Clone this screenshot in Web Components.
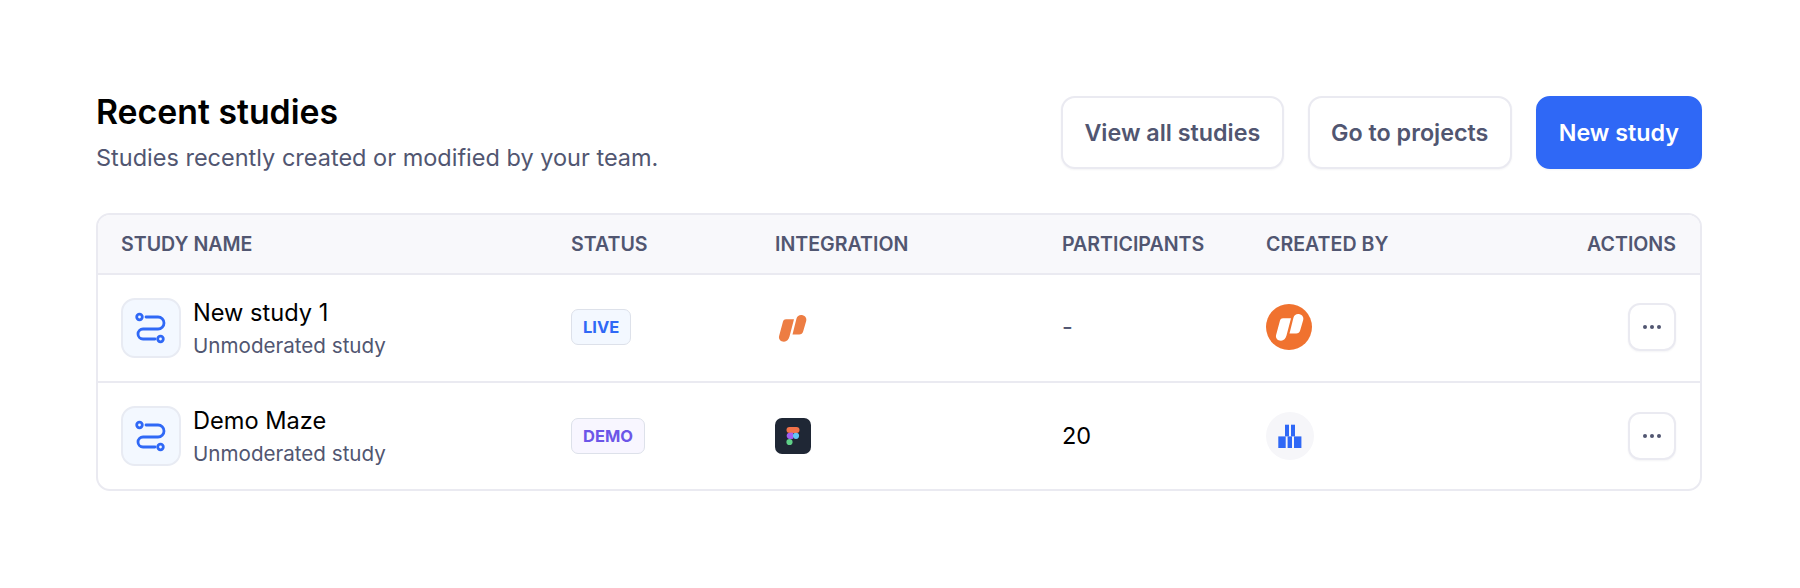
<!DOCTYPE html>
<html lang="en">
<head>
<meta charset="utf-8">
<title>Recent studies</title>
<style>
  html, body { margin: 0; background: #fff; }
  body { font-family: Inter, "Noto Sans", sans-serif; color: #000; }
</style>
</head>
<body>
<studies-page>
  <section-header slot="header" heading="Recent studies" description="Studies recently created or modified by your team.">
    <app-button>View all studies</app-button>
    <app-button>Go to projects</app-button>
    <app-button primary>New study</app-button>
  </section-header>
  <studies-table slot="table">
    <study-row name="New study 1" type="Unmoderated study" participants="-" dash>
      <status-badge slot="status" kind="live">LIVE</status-badge>
      <brand-icon slot="integration" name="mark"></brand-icon>
      <brand-icon slot="owner" name="avatar-orange"></brand-icon>
    </study-row>
    <study-row name="Demo Maze" type="Unmoderated study" participants="20">
      <status-badge slot="status" kind="demo">DEMO</status-badge>
      <brand-icon slot="integration" name="figma"></brand-icon>
      <brand-icon slot="owner" name="avatar-grey"></brand-icon>
    </study-row>
  </studies-table>
</studies-page>

<script>
const GRID_COLUMNS = '450px 204px 287px 204px 1fr auto';

// same two-stroke logo is used for the integration and the avatar
const MARK_PATHS = `
  <path d="M8 12.5c.5-1.5 1.5-2.3 3-2.3h8L14.5 27.5c-.7 3-2.8 5.2-5.5 5.2-3.5 0-5.7-2.7-4.9-5.7z"/>
  <path d="M21.5 9.5c.7-2.4 2.8-3.8 5.2-3.5 3.3.4 5.3 3.1 4.5 5.9l-3 10.3c-.6 2.2-2 3.3-4 3.3H17.5z"/>
`;

class StudiesPage extends HTMLElement {
  connectedCallback() {
    this.attachShadow({ mode: 'open' });
    this.shadowRoot.innerHTML = `
      <style>
        :host { display: block; padding: 96px 98px 0 96px; }
        .stack { display: flex; flex-direction: column; gap: 44px; }
      </style>
      <div class="stack">
        <slot name="header"></slot>
        <slot name="table"></slot>
      </div>
    `;
  }
}

class SectionHeader extends HTMLElement {
  connectedCallback() {
    this.attachShadow({ mode: 'open' });
    this.shadowRoot.innerHTML = `
      <style>
        :host { display: flex; justify-content: space-between; align-items: center; height: 73px; }
        h2 { margin: 0; font-size: 33.8px; line-height: 38px; font-weight: 600; color: #000; }
        p { margin: 13px 0 0; font-size: 23.5px; line-height: 28px; font-weight: 400; color: #515671; }
        .actions { display: flex; gap: 24px; }
      </style>
      <div>
        <h2>${this.getAttribute('heading')}</h2>
        <p>${this.getAttribute('description')}</p>
      </div>
      <div class="actions"><slot></slot></div>
    `;
  }
}

class AppButton extends HTMLElement {
  connectedCallback() {
    this.attachShadow({ mode: 'open' });
    this.shadowRoot.innerHTML = `
      <style>
        :host { display: block; }
        button {
          height: 73px;
          padding: 0 21.4px;
          border: 2px solid #eaeaf1;
          border-radius: 14px;
          background: #fff;
          color: #515671;
          font: 600 23.3px Inter, sans-serif;
          box-shadow: 0 1px 2px rgba(40, 40, 80, 0.05);
        }
        :host([primary]) button { background: #2f68f6; border-color: #2f68f6; color: #fff; padding: 0 21px; }
      </style>
      <button><slot></slot></button>
    `;
  }
}

class StudiesTable extends HTMLElement {
  connectedCallback() {
    this.attachShadow({ mode: 'open' });
    this.shadowRoot.innerHTML = `
      <style>
        :host { display: block; border: 2px solid #eaeaf1; border-radius: 14px; overflow: hidden; background: #fff; }
        .head {
          display: grid;
          grid-template-columns: ${GRID_COLUMNS};
          align-items: center;
          height: 58px;
          padding: 0 24px 0 23px;
          background: #f8f8fb;
          border-bottom: 2px solid #eaeaf1;
          font-size: 19.6px;
          font-weight: 600;
          color: #515671;
        }
      </style>
      <div class="head">
        <span>STUDY NAME</span>
        <span>STATUS</span>
        <span>INTEGRATION</span>
        <span>PARTICIPANTS</span>
        <span>CREATED BY</span>
        <span>ACTIONS</span>
      </div>
      <slot></slot>
    `;
  }
}

class StudyRow extends HTMLElement {
  connectedCallback() {
    this.attachShadow({ mode: 'open' });
    this.shadowRoot.innerHTML = `
      <style>
        :host {
          display: grid;
          grid-template-columns: ${GRID_COLUMNS};
          align-items: center;
          height: 106px;
          padding: 0 24px 0 23px;
        }
        :host(:not(:last-child)) { border-bottom: 2px solid #eaeaf1; }
        :host(:not(:last-child)) .lift { margin-bottom: 2px; }
        .study { display: flex; align-items: center; gap: 12px; }
        .tile {
          box-sizing: border-box;
          width: 60px; height: 60px;
          display: flex; align-items: center; justify-content: center;
          background: #f3f8ff;
          border: 2px solid #e8ebf3;
          border-radius: 14px;
        }
        .text { padding-top: 2px; }
        .name { font-size: 23.6px; line-height: 28px; color: #000; }
        .type { margin-top: 6px; font-size: 20.6px; line-height: 26px; color: #515671; }
        .count { font-size: 23.5px; line-height: 26px; color: #000; padding-bottom: 1px; }
        :host([dash]) .count { color: #515671; }
        .more {
          box-sizing: border-box;
          width: 48px; height: 48px;
          display: flex; align-items: center; justify-content: center;
          background: #fff;
          border: 2px solid #eaeaf1;
          border-radius: 12px;
          box-shadow: 0 1px 2px rgba(40, 40, 80, 0.05);
        }
      </style>
      <div class="study">
        <div class="tile">
          <svg width="34" height="34" viewBox="0 0 34 34" fill="none" stroke="#2f68f6" stroke-width="2.8" stroke-linecap="round">
            <circle cx="5.5" cy="6" r="2.8"/>
            <circle cx="26.5" cy="28" r="2.8"/>
            <path d="M12 6h12a6 6 0 0 1 0 12H9a5 5 0 0 0 0 10h12"/>
          </svg>
        </div>
        <div class="text">
          <div class="name">${this.getAttribute('name')}</div>
          <div class="type">${this.getAttribute('type')}</div>
        </div>
      </div>
      <div class="lift"><slot name="status"></slot></div>
      <div class="lift"><slot name="integration"></slot></div>
      <div class="count lift">${this.getAttribute('participants')}</div>
      <div class="lift"><slot name="owner"></slot></div>
      <div class="more lift">
        <svg width="20" height="6" viewBox="0 0 20 6" fill="#515671">
          <circle cx="3" cy="3" r="2"/><circle cx="10" cy="3" r="2"/><circle cx="17" cy="3" r="2"/>
        </svg>
      </div>
    `;
  }
}

class StatusBadge extends HTMLElement {
  connectedCallback() {
    this.attachShadow({ mode: 'open' });
    this.shadowRoot.innerHTML = `
      <style>
        :host {
          display: inline-flex;
          align-items: center;
          box-sizing: border-box;
          height: 36px;
          padding: 0 11px;
          border: 1.5px solid #dde1ea;
          border-radius: 7px;
          font-size: 16.5px;
          font-weight: 700;
          vertical-align: middle;
        }
        :host([kind="live"]) { background: #f3f8ff; color: #2f68f6; }
        :host([kind="demo"]) { background: #f8f6ff; color: #6c56e8; }
      </style>
      <slot></slot>
    `;
  }
}

const BRAND_ICONS = {
  mark: `<svg width="36" height="36" viewBox="0 0 36 36"><g fill="#ed7d43">${MARK_PATHS}</g></svg>`,
  figma: `<svg width="36" height="36" viewBox="0 0 36 36">
    <rect width="36" height="36" rx="7" fill="#1f2735"/>
    <rect x="11.5" y="9" width="13" height="6" rx="3" fill="#f2724a"/>
    <circle cx="14.8" cy="17.8" r="3.1" fill="#a45ff0"/>
    <rect x="14.8" y="14.7" width="3.4" height="6.2" fill="#a45ff0"/>
    <circle cx="21" cy="17.8" r="3.1" fill="#62c6f5"/>
    <circle cx="14.5" cy="24" r="3.1" fill="#5fd088"/>
  </svg>`,
  'avatar-orange': `<svg width="46" height="46" viewBox="0 0 46 46">
    <circle cx="23" cy="23" r="23" fill="#f0722f"/>
    <g fill="#fff" transform="translate(6 4)">${MARK_PATHS}</g>
  </svg>`,
  'avatar-grey': `<svg width="48" height="48" viewBox="0 0 48 48">
    <circle cx="24" cy="24" r="24" fill="#f6f6f9"/>
    <g fill="#2f68f6">
      <rect x="19" y="12.7" width="4" height="11.7"/>
      <rect x="25" y="12.7" width="4" height="11.7"/>
      <rect x="12.3" y="24.4" width="7.4" height="11.6"/>
      <rect x="21.6" y="24.4" width="4.4" height="11.6"/>
      <rect x="28" y="24.4" width="7.4" height="11.6"/>
    </g>
  </svg>`
};

class BrandIcon extends HTMLElement {
  connectedCallback() {
    this.attachShadow({ mode: 'open' });
    this.shadowRoot.innerHTML = `
      <style>
        :host { display: block; width: fit-content; }
        svg { display: block; }
      </style>
      ${BRAND_ICONS[this.getAttribute('name')]}
    `;
  }
}

customElements.define('studies-page', StudiesPage);
customElements.define('section-header', SectionHeader);
customElements.define('app-button', AppButton);
customElements.define('studies-table', StudiesTable);
customElements.define('study-row', StudyRow);
customElements.define('status-badge', StatusBadge);
customElements.define('brand-icon', BrandIcon);
</script>
</body>
</html>
